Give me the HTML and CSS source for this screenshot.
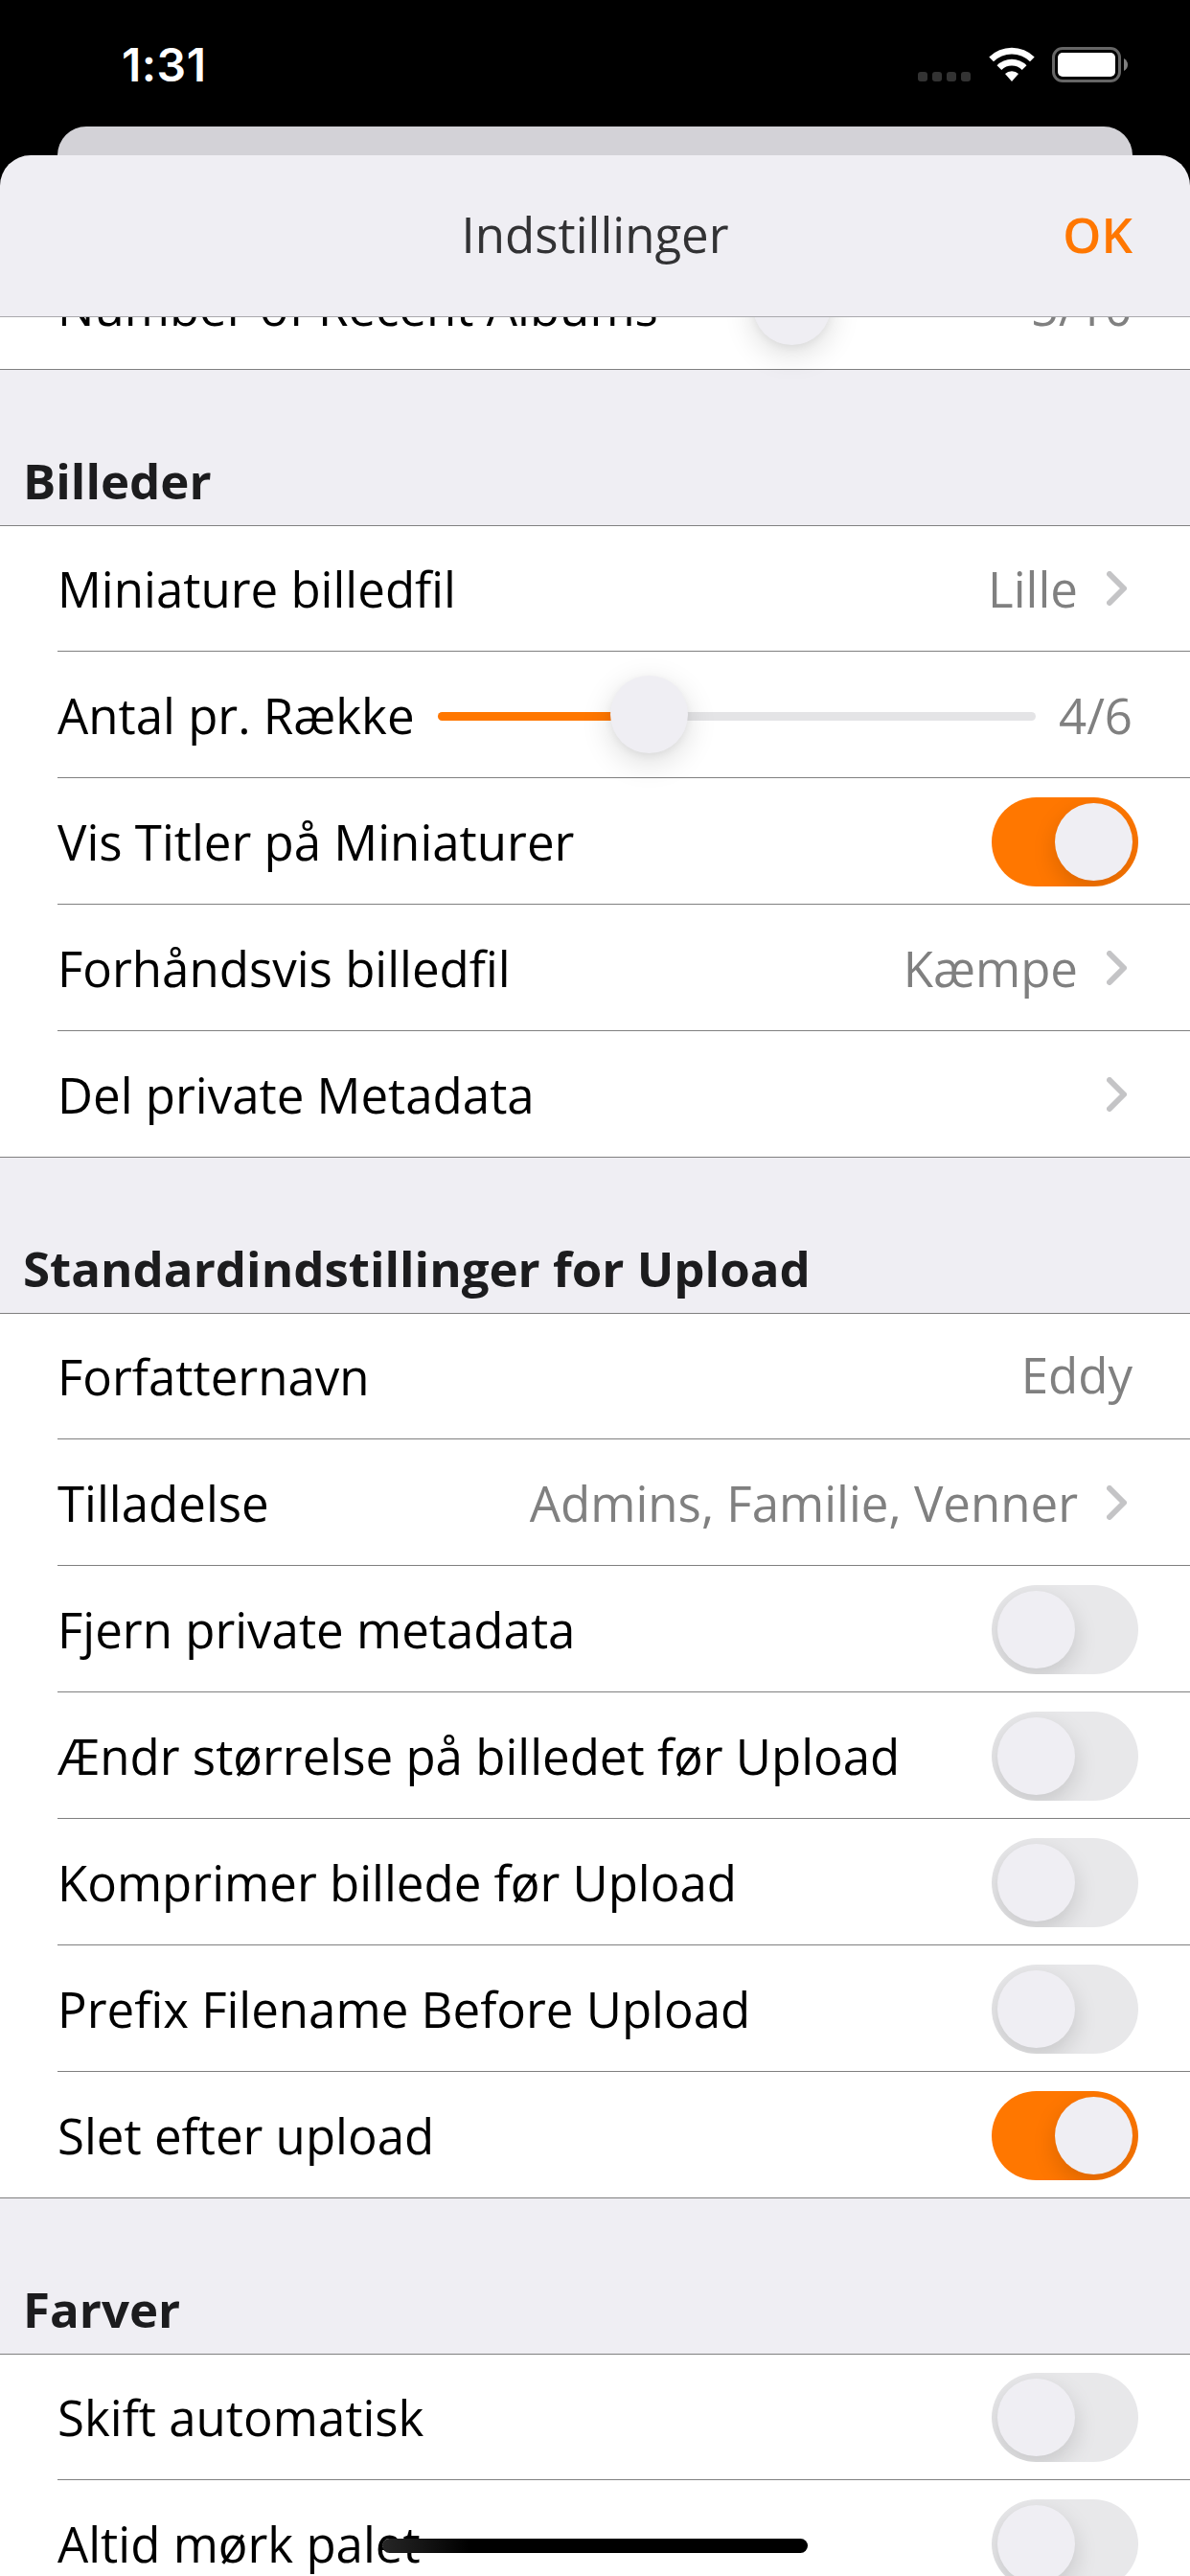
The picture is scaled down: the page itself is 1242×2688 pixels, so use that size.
FILE: index.html
```html
<!DOCTYPE html>
<html lang="da">
<head>
<meta charset="utf-8">
<title>Indstillinger</title>
<link rel="stylesheet" href="styles.css">
</head>
<body>
<div class="screen">
  <div class="status">
    <span class="time">1:31</span>
    <div class="status-icons">
      <div class="cell"><i></i><i></i><i></i><i></i></div>
      <svg class="wifi" width="48" height="36" viewBox="0 0 48 36" fill="#fff">
        <path d="M0.3 10.6 A33.5 33.5 0 0 1 47.7 10.6 L43 15.3 A27 27 0 0 0 5 15.3 Z"/>
        <path d="M8.5 19.2 A22 22 0 0 1 39.5 19.2 L34.7 24 A15.2 15.2 0 0 0 13.3 24 Z"/>
        <path d="M17 28 A10 10 0 0 1 31 28 L24 36 Z"/>
      </svg>
      <svg class="battery" width="80" height="37" viewBox="0 0 80 37">
        <rect x="1.5" y="1.5" width="69" height="34" rx="9.5" fill="none" stroke="#666" stroke-width="3"/>
        <rect x="6" y="6" width="60" height="25" rx="5" fill="#fff"/>
        <path d="M75 12 Q79 14.500 79 18.500 Q79 22.500 75 25 Z" fill="#808080"/>
      </svg>
    </div>
  </div>
  <div class="back-card"></div>
  <main class="sheet">
    <header class="navbar">
      <span></span>
      <h1>Indstillinger</h1>
      <a class="done">OK</a>
    </header>
    <div class="list">
      <section class="group group-scrolled">
        <div class="row slider-row"><span class="label">Number of Recent Albums</span><div class="slider"><div class="fill" style="width:33.8%"></div><div class="thumb" style="left:75.5px"></div></div><span class="value">5/10</span></div>
      </section>

      <h2>Billeder</h2>
      <section class="group">
        <div class="row"><span class="label">Miniature billedfil</span><span class="value">Lille</span><svg class="chevron" width="21" height="36" viewBox="0 0 21 36"><path d="M3 3 L18 18 L3 33"/></svg></div>
        <div class="row slider-row"><span class="label">Antal pr. Række</span><div class="slider"><div class="fill" style="width:35.3%"></div><div class="thumb" style="left:180px"></div></div><span class="value">4/6</span></div>
        <div class="row"><span class="label">Vis Titler på Miniaturer</span><div class="toggle on"><div class="knob"></div></div></div>
        <div class="row"><span class="label">Forhåndsvis billedfil</span><span class="value">Kæmpe</span><svg class="chevron" width="21" height="36" viewBox="0 0 21 36"><path d="M3 3 L18 18 L3 33"/></svg></div>
        <div class="row"><span class="label">Del private Metadata</span><svg class="chevron" width="21" height="36" viewBox="0 0 21 36"><path d="M3 3 L18 18 L3 33"/></svg></div>
      </section>

      <h2>Standardindstillinger for Upload</h2>
      <section class="group">
        <div class="row"><span class="label">Forfatternavn</span><span class="value field">Eddy</span></div>
        <div class="row"><span class="label">Tilladelse</span><span class="value">Admins, Familie, Venner</span><svg class="chevron" width="21" height="36" viewBox="0 0 21 36"><path d="M3 3 L18 18 L3 33"/></svg></div>
        <div class="row"><span class="label">Fjern private metadata</span><div class="toggle"><div class="knob"></div></div></div>
        <div class="row"><span class="label">Ændr størrelse på billedet før Upload</span><div class="toggle"><div class="knob"></div></div></div>
        <div class="row"><span class="label">Komprimer billede før Upload</span><div class="toggle"><div class="knob"></div></div></div>
        <div class="row"><span class="label">Prefix Filename Before Upload</span><div class="toggle"><div class="knob"></div></div></div>
        <div class="row"><span class="label">Slet efter upload</span><div class="toggle on"><div class="knob"></div></div></div>
      </section>

      <h2>Farver</h2>
      <section class="group">
        <div class="row"><span class="label">Skift automatisk</span><div class="toggle"><div class="knob"></div></div></div>
        <div class="row"><span class="label">Altid mørk palet</span><div class="toggle"><div class="knob"></div></div></div>
      </section>
    </div>
  </main>
  <div class="home-indicator"></div>
</div>
</body>
</html>
```
FILE: styles.css
```css
* { box-sizing: border-box; }

body {
  margin: 0;
  background: #000;
  font-family: "Open Sans", "Noto Sans", sans-serif;
  font-size: 51px;
  line-height: 70px;
}

.screen {
  position: relative;
  display: flex;
  flex-direction: column;
  width: 1242px;
  height: 2688px;
  overflow: hidden;
}

/* Status bar */
.status {
  flex: none;
  display: flex;
  justify-content: space-between;
  height: 132px;
  padding: 49px 64px 0 127px;
}
.time {
  font: 600 48px/37px Inter, sans-serif;
  letter-spacing: .5px;
  color: #fff;
}
.status-icons { display: flex; align-items: flex-start; }
.cell { display: flex; gap: 5px; margin: 26px 19px 0 0; }
.cell i { width: 10px; height: 10px; border-radius: 3px; background: #333; }
.wifi { margin-right: 18px; }

/* Sheets */
.back-card {
  flex: none;
  height: 30px;
  margin: 0 60px;
  border-radius: 30px 30px 0 0;
  background: #d3d2d7;
}
.sheet {
  flex: 1;
  min-height: 0;
  display: flex;
  flex-direction: column;
  border-radius: 32px 32px 0 0;
  background: #efeef3;
  overflow: hidden;
}
.navbar {
  flex: none;
  display: grid;
  grid-template-columns: 1fr auto 1fr;
  align-items: center;
  height: 169px;
  padding: 0 60px 4px;
  border-bottom: 1px solid #a9a9ad;
}
h1 { margin: 0; font: inherit; color: #323234; }
.done { justify-self: end; font-weight: 600; color: #ff7700; }

/* Settings list */
.list { flex: 1; min-height: 0; overflow: hidden; }
h2 {
  margin: 0;
  height: 162px;
  padding: 80px 24px 0;
  font: inherit;
  font-weight: 700;
  color: #1c1c1e;
}
.group {
  padding-left: 60px;
  border: solid #808080;
  border-width: 1px 0;
  background: #fff;
}
.group-scrolled { margin-top: -78px; }
.row {
  display: flex;
  align-items: center;
  height: 132px;
  padding-right: 60px;
  border-bottom: 1px solid #808080;
}
.row:first-child { height: 131px; }
.row:last-child { border-bottom: 0; height: 131px; }
.group-scrolled .row { height: 131px; }
.label { color: #000; white-space: nowrap; }
.value { margin-left: auto; color: #808080; white-space: nowrap; }
.field { margin-bottom: 4px; }
.chevron {
  flex: none;
  margin: 0 6px 0 30px;
  fill: none;
  stroke: #c4c4c6;
  stroke-width: 6;
  stroke-linecap: round;
  stroke-linejoin: round;
}
.label + .chevron { margin-left: auto; }

.slider {
  position: relative;
  flex: 1;
  height: 9px;
  margin: 4px 24px 0;
  border-radius: 5px;
  background: #e4e4e6;
}
.fill { height: 9px; border-radius: 5px 0 0 5px; background: #ff7700; }
.thumb {
  position: absolute;
  top: -38px;
  width: 81px;
  height: 81px;
  border-radius: 50%;
  background: #efeef3;
  box-shadow: 0 9px 32px rgba(0, 0, 0, .14), 0 3px 9px rgba(0, 0, 0, .05);
}

.toggle {
  flex: none;
  display: flex;
  width: 153px;
  height: 93px;
  margin: 2px -6px 0 auto;
  padding: 6px;
  border-radius: 47px;
  background: #e8e8ea;
  overflow: hidden;
}
.row:first-child .toggle { margin-top: 1px; }
.toggle.on { justify-content: flex-end; background: #ff7700; }
.knob {
  width: 81px;
  height: 81px;
  border-radius: 50%;
  background: #efeef3;
  box-shadow: 0 9px 24px rgba(0, 0, 0, .15);
}

.home-indicator {
  position: absolute;
  left: 399px;
  top: 2649px;
  width: 444px;
  height: 15px;
  border-radius: 8px;
  background: linear-gradient(90deg, #262626, #000 90px);
}
```
